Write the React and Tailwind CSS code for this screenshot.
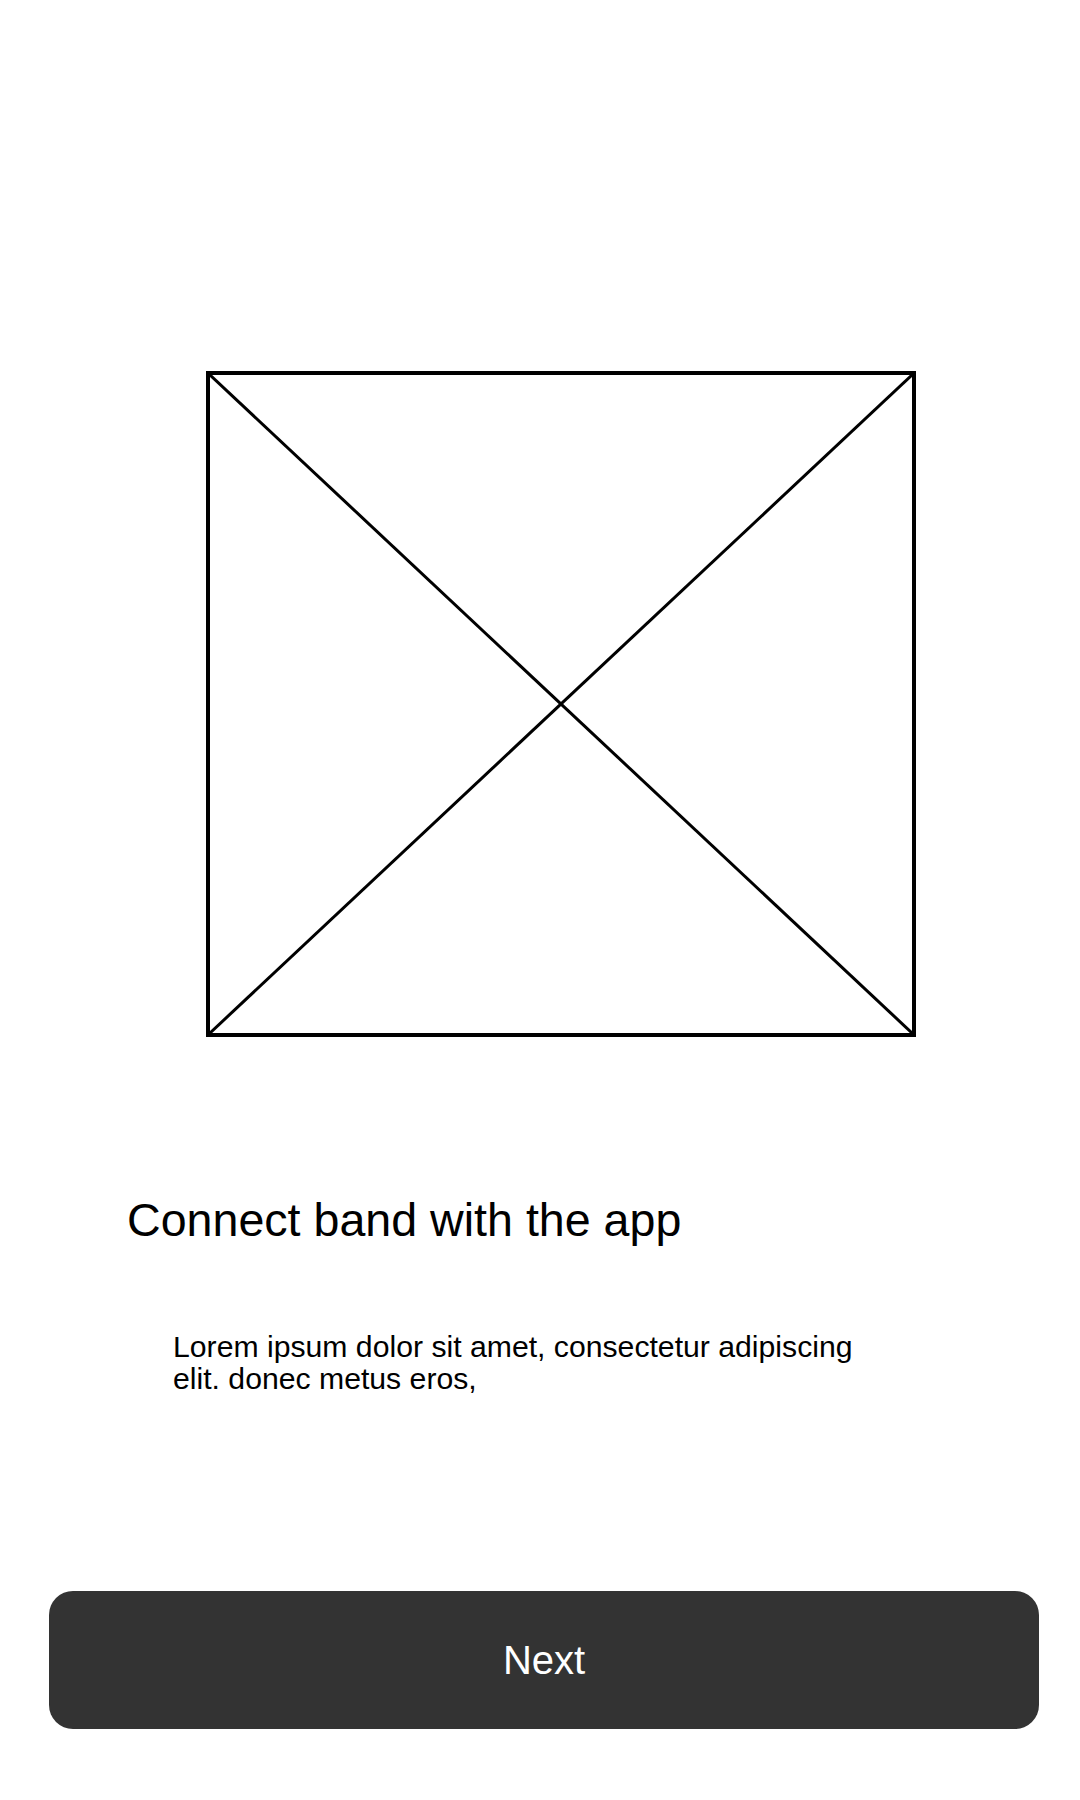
const Placeholder = () => (
    <div className="ml-[206px] mt-[371px] w-[710px] h-[666px] border-4 border-black">
        <svg
            className="block w-full h-full"
            viewBox="0 0 100 100"
            preserveAspectRatio="none"
        >
            <line x1="0" y1="0" x2="100" y2="100" stroke="black" strokeWidth="3" vectorEffect="non-scaling-stroke" />
            <line x1="100" y1="0" x2="0" y2="100" stroke="black" strokeWidth="3" vectorEffect="non-scaling-stroke" />
        </svg>
    </div>
);

export default function App() {
    return (
        <div className="flex flex-col min-h-[1800px] w-[1080px] bg-white font-['Liberation_Sans',Arial,sans-serif] text-black">
            <Placeholder />

            <h1 className="ml-[127px] mt-[160px] text-[46.6px] leading-[47px] font-normal">
                Connect band with the app
            </h1>

            <p className="ml-[173px] mt-[87px] w-[700px] text-[30.2px] leading-[32px]">
                Lorem ipsum dolor sit amet, consectetur adipiscing elit. donec metus eros,
            </p>

            <button className="ml-[49px] mt-[196px] w-[990px] h-[138px] rounded-[24px] bg-[#333333] text-white text-[40px] leading-none">
                Next
            </button>
        </div>
    );
}
